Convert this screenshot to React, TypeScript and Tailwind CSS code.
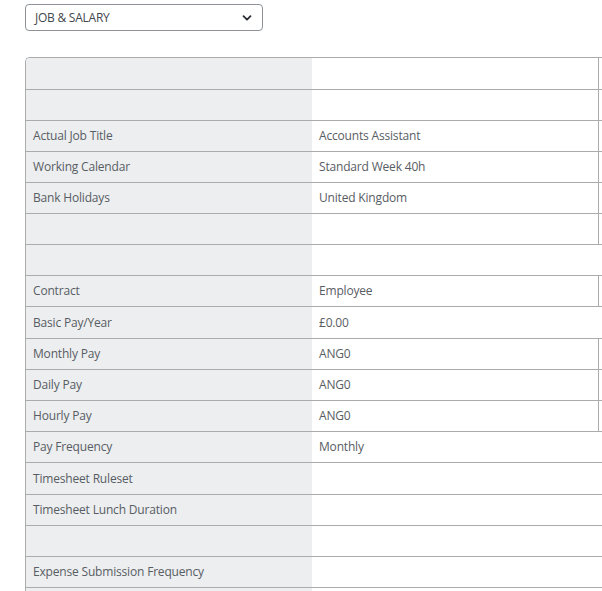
import React from "react";

type Row = { label: string; value: string; h: number; border: boolean };

const rows: Row[] = [
  { label: "", value: "", h: 32, border: true },
  { label: "", value: "", h: 31, border: true },
  { label: "Actual Job Title", value: "Accounts Assistant", h: 31, border: true },
  { label: "Working Calendar", value: "Standard Week 40h", h: 31, border: true },
  { label: "Bank Holidays", value: "United Kingdom", h: 31, border: true },
  { label: "", value: "", h: 31, border: true },
  { label: "", value: "", h: 31, border: false },
  { label: "Contract", value: "Employee", h: 31, border: true },
  { label: "Basic Pay/Year", value: "£0.00", h: 32, border: false },
  { label: "Monthly Pay", value: "ANG0", h: 31, border: true },
  { label: "Daily Pay", value: "ANG0", h: 31, border: true },
  { label: "Hourly Pay", value: "ANG0", h: 31, border: true },
  { label: "Pay Frequency", value: "Monthly", h: 31, border: false },
  { label: "Timesheet Ruleset", value: "", h: 32, border: false },
  { label: "Timesheet Lunch Duration", value: "", h: 31, border: false },
  { label: "", value: "", h: 31, border: false },
  { label: "Expense Submission Frequency", value: "", h: 31, border: false },
  { label: "", value: "", h: 31, border: false },
];

const heightClass: Record<number, string> = {
  31: "h-[31px]",
  32: "h-[32px]",
};

export default function App() {
  return (
    <div
      className="w-[602px] h-[591px] overflow-hidden bg-white text-[#585d63]"
      style={{ fontFamily: '"Open Sans", "Noto Sans", Arial, sans-serif' }}
    >
      <div className="pt-[4px] pl-[25px]">
        <div className="w-[238px] h-[27px] border border-[#8f9398] rounded-[4px] flex items-center justify-between pl-[9px] pr-[9px]">
          <span className="text-[12px] text-[#44484d] tracking-[-0.02em]">JOB &amp; SALARY</span>
          <svg width="12" height="12" viewBox="0 0 12 12" fill="none">
            <path d="M2.5 4.2 L6 7.7 L9.5 4.2" stroke="#2a2d31" strokeWidth="1.8" strokeLinecap="round" strokeLinejoin="round" />
          </svg>
        </div>
      </div>
      <div className="ml-[25px] mt-[26px] w-[620px] border-t border-l border-[#ababab] rounded-tl-[5px] overflow-hidden">
        {rows.map((r, i) => (
          <div
            key={i}
            className={`grid grid-cols-[286px_287px_1fr] border-b border-[#ababab] ${heightClass[r.h]}`}
          >
            <div className="bg-[#eceef0] flex items-center pl-[7px] text-[12px] tracking-[-0.015em]">
              {r.label}
            </div>
            <div
              className={`flex items-center pl-[7px] text-[12px] tracking-[-0.015em] ${r.border ? "border-r border-[#ababab]" : ""}`}
            >
              {r.value}
            </div>
            <div />
          </div>
        ))}
      </div>
    </div>
  );
}
